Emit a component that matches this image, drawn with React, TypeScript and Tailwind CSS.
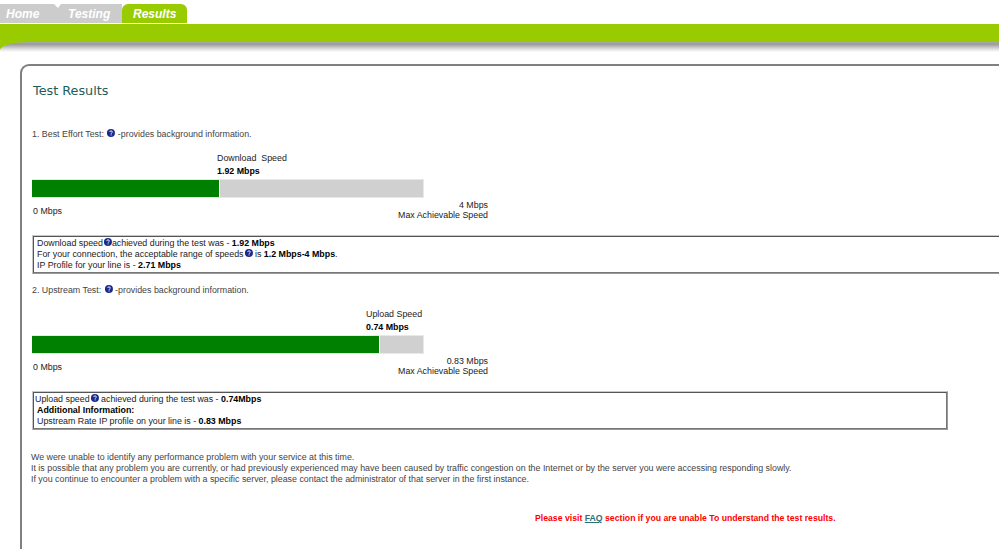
import React from 'react';

function HelpIcon() {
  return (
    <svg width="9" height="8" viewBox="-1 0 10 9" className="inline-block align-baseline">
      <circle cx="4.5" cy="4.5" r="4.5" fill="#1c2a8c" />
      <path d="M3 3.4c.1-.9.8-1.3 1.6-1.3.9 0 1.5.5 1.5 1.2 0 .6-.4.9-.8 1.2-.4.2-.6.4-.6.9" fill="none" stroke="#fff" strokeWidth="1" />
      <rect x="4.1" y="6.1" width="1.1" height="1.1" fill="#fff" />
    </svg>
  );
}

function SpeedBar(props: { label: string; value: string; max: string; percent: number; labelLeft: number }) {
  return (
    <div>
      <div className="text-[#222] leading-[13px]" style={{ marginLeft: props.labelLeft }}>
        <div className="whitespace-pre">{props.label}</div>
        <div className="font-bold text-black">{props.value}</div>
      </div>
      <div className="mt-[1px] w-[392px] h-[19px] flex border-y border-r border-[#e8e8e8] bg-[#d0d0d0]">
        <div className="bg-[#008000] border-r border-white" style={{ width: props.percent + '%' }} />
      </div>
      <div className="w-[456px] flex justify-between text-[#222] leading-[10px]">
        <div className="mt-[8px] ml-[1px]">0 Mbps</div>
        <div className="mt-[2px] text-right">
          <div>{props.max}</div>
          <div>Max Achievable Speed</div>
        </div>
      </div>
    </div>
  );
}

function InfoBox(props: { className: string; innerClass: string; children: React.ReactNode }) {
  return (
    <div className={'border border-t-[#c8c8c8] border-l-[#c8c8c8] border-r-[#999] border-b-[#999] ' + props.className}>
      <div className={'border border-t-[#555] border-l-[#555] border-r-[#777] border-b-[#777] leading-[11px] text-[#222] pt-[1px] pb-[1px] ' + props.innerClass}>
        {props.children}
      </div>
    </div>
  );
}

export default function App() {
  return (
    <div className="h-[549px] w-[999px] overflow-hidden bg-white text-[8.85px] font-['Liberation_Sans',Arial,sans-serif]">
      {/* tabs */}
      <div className="h-[24px] pt-[4px] pb-[1px] flex items-stretch text-[12px] font-bold italic text-white leading-[20px]">
        <div className="w-[58px] pl-[6px] bg-[#cccccc] [clip-path:polygon(0_0,54px_0,58px_4px,58px_100%,0_100%)]">Home</div>
        <div className="w-[64px] pl-[10px] bg-[#cccccc] [clip-path:polygon(0_4px,3px_0,100%_0,100%_100%,0_100%)]">Testing</div>
        <div className="w-[65px] pl-[11px] bg-[#99cc00] rounded-t-[6px]">Results</div>
      </div>
      <div className="h-[525px] bg-[#99cc00] pt-[18px]">
        <div className="h-full rounded-tl-[30px_8px] bg-[linear-gradient(#aaa,#999_2px,#ddd_7px,#fff_10px)] pl-[20px] pt-[22px]">
          <div className="h-full border-l-2 border-t-2 border-[#808080] rounded-tl-[9px] bg-white pl-[10px]">
            <h1 className="mt-[17px] ml-[1px] text-[12.8px] leading-[16px] font-['DejaVu_Sans',sans-serif] text-[#1f5c5c]">Test Results</h1>

            <p className="mt-[29px] text-[#444] leading-[12px]">
              1. Best Effort Test: <HelpIcon /> -provides background information.
            </p>
            <div className="mt-[12px]">
              <SpeedBar label="Download  Speed" value="1.92 Mbps" max="4 Mbps" percent={48} labelLeft={185} />
            </div>
            <InfoBox className="mt-[15px] -mr-[4px]" innerClass="pl-[3px]">
              <div>Download speed<HelpIcon />achieved during the test was - <b className="text-black">1.92 Mbps</b></div>
              <div>For your connection, the acceptable range of speeds<HelpIcon /> is <b className="text-black">1.2 Mbps-4 Mbps</b>.</div>
              <div>IP Profile for your line is - <b className="text-black">2.71 Mbps</b></div>
            </InfoBox>

            <p className="mt-[10px] text-[#444] leading-[12px]">
              2. Upstream Test: <HelpIcon /> -provides background information.
            </p>
            <div className="mt-[12px]">
              <SpeedBar label="Upload Speed" value="0.74 Mbps" max="0.83 Mbps" percent={89} labelLeft={334} />
            </div>
            <InfoBox className="mt-[15px] w-[916px]" innerClass="pl-[1px]">
              <div>Upload speed<HelpIcon /> achieved during the test was - <b className="text-black">0.74Mbps</b></div>
              <div className="ml-[2px] font-bold text-black">Additional Information:</div>
              <div className="ml-[2px]">Upstream Rate IP profile on your line is - <b className="text-black">0.83 Mbps</b></div>
            </InfoBox>

            <div className="mt-[22px] -ml-[1px] text-[#444] leading-[11px]">
              <p>We were unable to identify any performance problem with your service at this time.</p>
              <p>It is possible that any problem you are currently, or had previously experienced may have been caused by traffic congestion on the Internet or by the server you were accessing responding slowly.</p>
              <p>If you continue to encounter a problem with a specific server, please contact the administrator of that server in the first instance.</p>
            </div>

            <p className="mt-[27px] ml-[503px] text-[8.7px] font-bold text-[#ff0000] leading-[12px]">
              Please visit <a href="#faq" className="underline text-[#2a6f7a]">FAQ</a> section if you are unable To understand the test results.
            </p>
          </div>
        </div>
      </div>
    </div>
  );
}
